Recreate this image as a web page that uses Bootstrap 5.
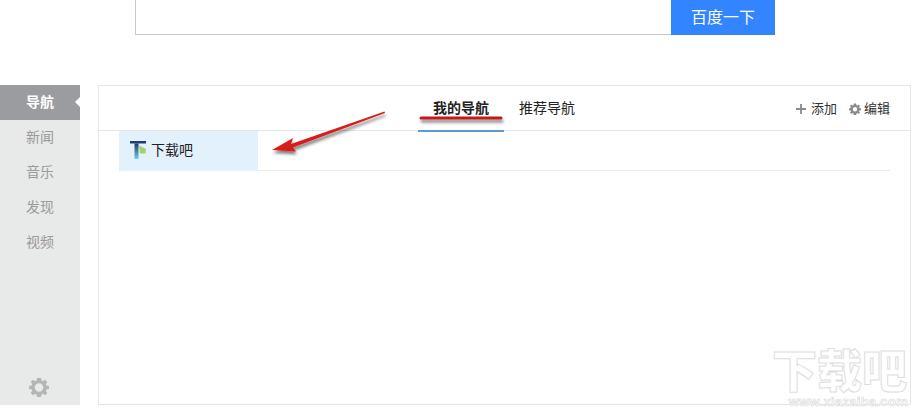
<!DOCTYPE html>
<html lang="zh">
<head>
<meta charset="utf-8">
<title>导航</title>
<link rel="stylesheet" href="https://cdn.jsdelivr.net/npm/bootstrap@5.3.0/dist/css/bootstrap.min.css">
<style>
html,body{margin:0;height:411px;overflow:hidden;background:#fff}
body{font-family:"Liberation Sans","Noto Sans CJK SC",sans-serif;font-size:14px;color:#222;position:relative}
.searchrow{margin-left:135px;width:640px;height:35px}
.searchinput{width:536px;height:35px;border-left:1px solid #c9c9c9;border-bottom:1px solid #c9c9c9}
.searchbtn{width:104px;height:35px;background:#3385ff;color:#fff;font-size:16px;border:0;border-radius:0;padding:0;line-height:32px}
.mainrow{margin-top:50px;height:320px}
.sidenav{width:80px;height:320px;background:#e8e9e9}
.sideitem{height:35px;line-height:35px;padding-left:26px;font-size:14px;color:#9a9a9a;position:relative}
.sideitem.active-item{background:#9b9ca0;color:#fff;font-weight:700}
.sideitem.active-item::after{content:"";position:absolute;right:0;top:12px;border:5px solid transparent;border-right-color:#fff;border-left-width:0}
.sidegear{height:35px;padding-left:29px;padding-top:6px}
.navpanel{margin-left:18px;width:813px;height:320px;border:1px solid #e6e6e6}
.panelhead{height:45px;border-bottom:1px solid #e6e6e6;position:relative}
.tabgroup{margin-left:319px;height:45px}
.tabitem{width:86px;height:46px;line-height:45px;text-align:center;color:#222;font-size:14px}
.tabitem.on{font-weight:700;border-bottom:2px solid #5b9bd5}
.tabitem.off{width:56px;margin-left:15px}
.headtools{position:absolute;right:20px;top:0;height:45px;font-size:13px;color:#333}
.toolplus{margin-right:5px}
.toolgear{margin-left:12px;margin-right:3px}
.linkrow{margin:0 20px;height:40px;border-bottom:1px solid #ececec}
.linkcell{width:139px;height:40px;background:#e3f1fc;padding-left:11px;padding-bottom:2px;font-size:14px;color:#222;gap:4px}
.markup{position:absolute;left:0;top:0;pointer-events:none}
.wmark{position:absolute;left:772px;top:350px;pointer-events:none;width:136px}
.wmark-cn{font-size:45px;font-weight:900;color:#fff;-webkit-text-stroke:1px #dedede;height:45px;line-height:45px;white-space:nowrap}
.wmark-en{margin-top:2px;font-size:13px;font-weight:700;color:#fff;-webkit-text-stroke:.6px #d8d8d8;letter-spacing:.3px;white-space:nowrap;text-align:right;line-height:10px}
</style>
</head>
<body>
<div class="searchrow d-flex">
  <div class="searchinput"></div>
  <button class="btn searchbtn" type="button">百度一下</button>
</div>
<div class="mainrow d-flex">
  <div class="sidenav d-flex flex-column">
    <div class="sideitem active-item">导航</div>
    <div class="sideitem">新闻</div>
    <div class="sideitem">音乐</div>
    <div class="sideitem">发现</div>
    <div class="sideitem">视频</div>
    <div class="flex-grow-1"></div>
    <div class="sidegear">
      <svg width="20" height="20" viewBox="0 0 20 20"><path fill="#b4b5b5" fill-rule="evenodd" d="M8 1h4l.5 2.600 1.400.6 2.200-1.500 2.200 2.200-1.500 2.200.6 1.400L20 9v3l-2.600.5-.6 1.400 1.500 2.200-2.200 2.200-2.200-1.500-1.400.6L12 20H8l-.5-2.600-1.400-.6-2.200 1.500-2.200-2.200 1.500-2.200-.6-1.400L0 12V9l2.600-.5.6-1.400-1.500-2.200 2.200-2.200 2.200 1.500 1.400-.6zM10 6.300a4.200 4.200 0 1 0 0 8.400 4.200 4.200 0 0 0 0-8.400z"/></svg>
    </div>
  </div>
  <div class="navpanel">
    <div class="panelhead">
      <div class="tabgroup d-flex">
        <div class="tabitem on">我的导航</div>
        <div class="tabitem off">推荐导航</div>
      </div>
      <div class="headtools d-flex align-items-center">
        <svg class="toolplus" width="10" height="10" viewBox="0 0 11 11"><path fill="#8a8a8a" d="M4.500 0h2v4.500H11v2H6.500V11h-2V6.500H0v-2h4.500z"/></svg>
        <span>添加</span>
        <svg class="toolgear" width="12" height="12" viewBox="0 0 20 20"><path fill="#8a8a8a" fill-rule="evenodd" d="M8 1h4l.5 2.600 1.400.6 2.200-1.500 2.200 2.200-1.500 2.200.6 1.400L20 9v3l-2.600.5-.6 1.400 1.500 2.200-2.200 2.200-2.200-1.500-1.400.6L12 20H8l-.5-2.600-1.400-.6-2.200 1.500-2.200-2.200 1.500-2.200-.6-1.400L0 12V9l2.600-.5.6-1.400-1.500-2.200 2.200-2.200 2.200 1.500 1.400-.6zM10 6.800a3.700 3.700 0 1 0 0 7.400 3.700 3.700 0 0 0 0-7.400z"/></svg>
        <span>编辑</span>
      </div>
    </div>
    <div class="linkrow">
      <div class="linkcell d-flex align-items-center">
        <svg width="17" height="18" viewBox="0 0 17 18">
          <defs><linearGradient id="stemgrad" x1="0" y1="0" x2="0" y2="1"><stop offset="0" stop-color="#173a6e"/><stop offset="1" stop-color="#6fd0e6"/></linearGradient></defs>
          <path fill="#1b3f73" d="M0 0h16v2.500H0z"/>
          <path fill="url(#stemgrad)" d="M4.500 2.500h4V18h-4z"/>
          <path fill="#a5d264" d="M9 4.500l7 3.500-.5 4.500H10z"/>
        </svg>
        <span>下载吧</span>
      </div>
    </div>
  </div>
</div>
<svg class="markup" width="914" height="411" viewBox="0 0 914 411">
  <defs><filter id="dropshade" x="-10%" y="-30%" width="120%" height="180%"><feDropShadow dx="1" dy="3" stdDeviation="1.500" flood-color="#000" flood-opacity=".5"/></filter></defs>
  <g filter="url(#dropshade)">
    <path d="M421 118H501" stroke="#c8161d" stroke-width="3" stroke-linecap="round" fill="none"/>
    <path fill="#d81e1e" d="M272 150L293 138 291 144 384.500 111.500 385 113 293 147.500 296 151.500z"/>
  </g>
</svg>
<div class="wmark">
  <div class="wmark-cn">下载吧</div>
  <div class="wmark-en">www.xiazaiba.com</div>
</div>
</body>
</html>
